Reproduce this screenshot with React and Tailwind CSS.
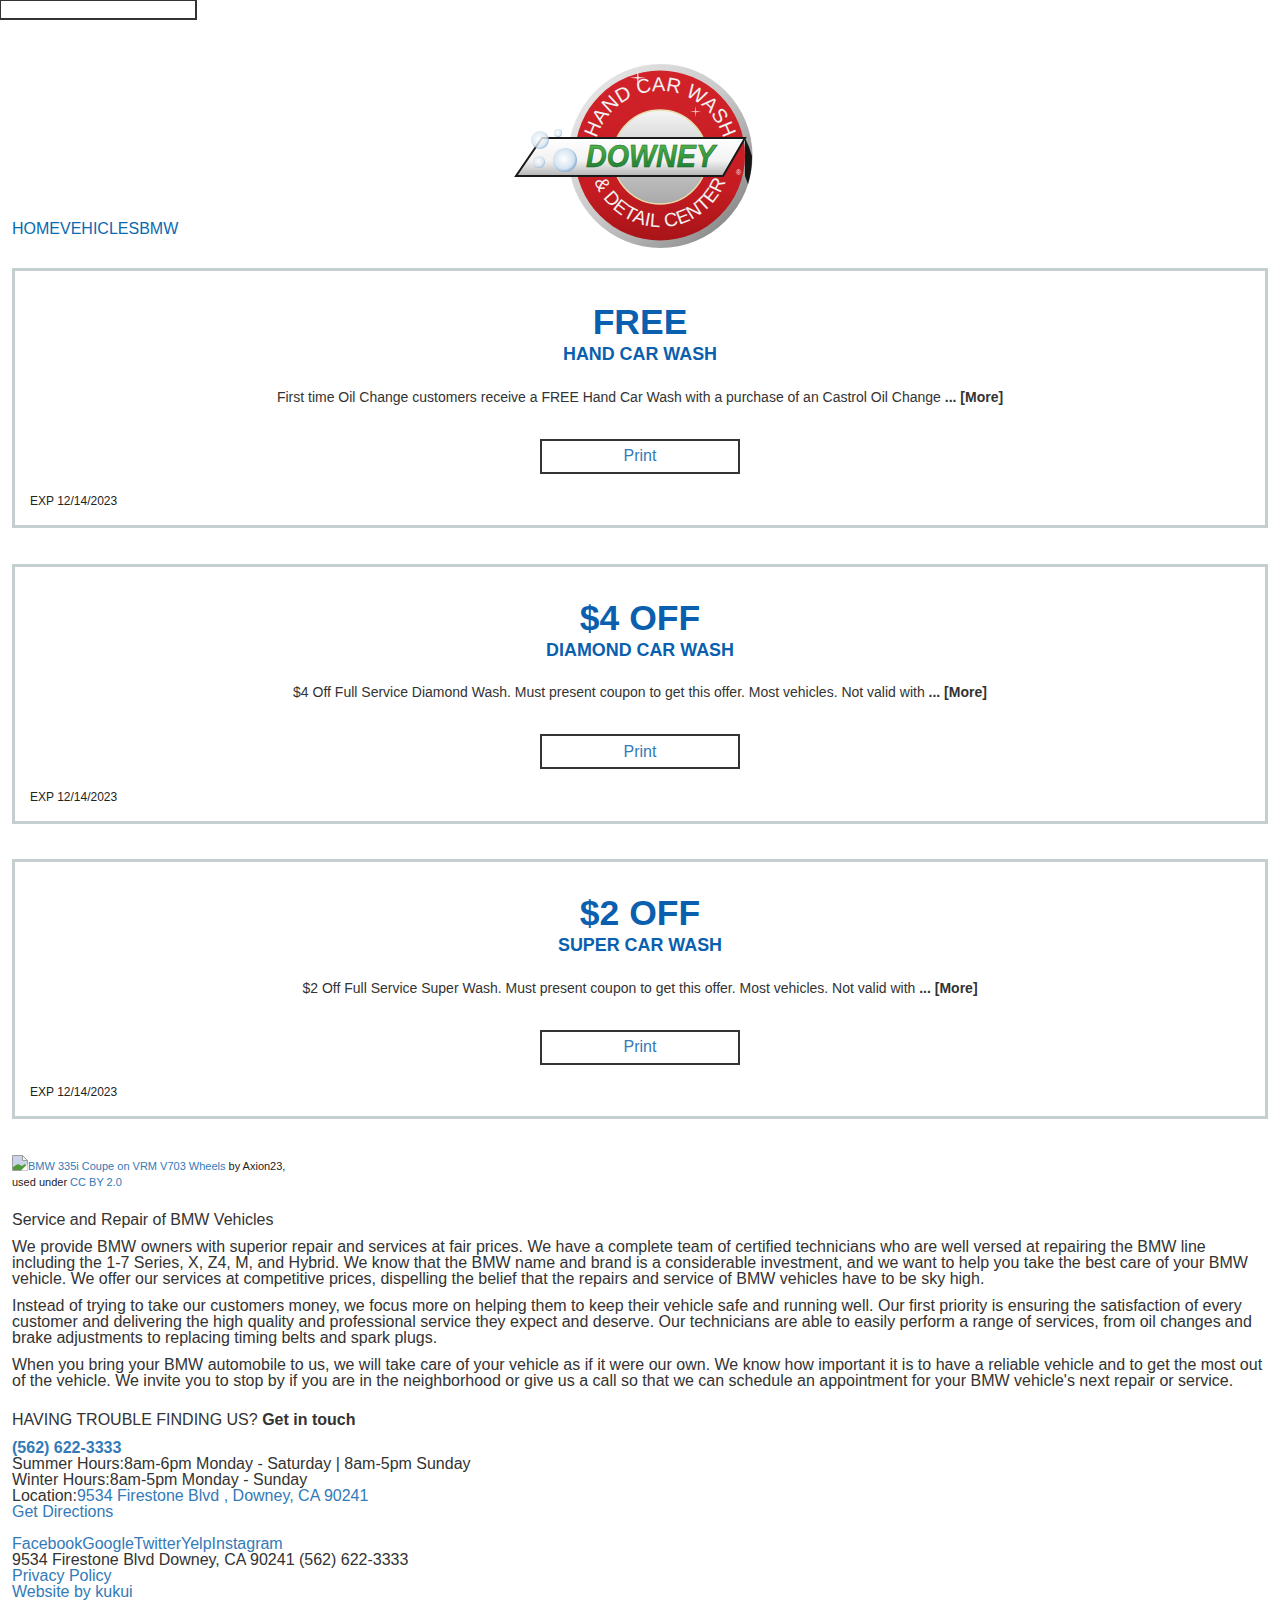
const blue = "text-[#0a5fae]";

function Logo() {
  return (
    <svg width="244" height="188" viewBox="0 0 244 188" className="block">
      <defs>
        <linearGradient id="rim" x1="0" y1="0" x2="1" y2="1">
          <stop offset="0" stopColor="#efefef" />
          <stop offset="0.5" stopColor="#c8c8c8" />
          <stop offset="0.8" stopColor="#9a9a9a" />
          <stop offset="1" stopColor="#6a6a6a" />
        </linearGradient>
        <linearGradient id="red" x1="0" y1="0" x2="0" y2="1">
          <stop offset="0" stopColor="#d2222a" />
          <stop offset="0.7" stopColor="#c41c22" />
          <stop offset="1" stopColor="#a81418" />
        </linearGradient>
        <linearGradient id="inner" x1="0" y1="0" x2="0" y2="1">
          <stop offset="0" stopColor="#f5f5f5" />
          <stop offset="0.45" stopColor="#cfcfcf" />
          <stop offset="1" stopColor="#a9a9a9" />
        </linearGradient>
        <linearGradient id="band" x1="0" y1="0" x2="0" y2="1">
          <stop offset="0" stopColor="#ffffff" />
          <stop offset="0.6" stopColor="#f2f2f2" />
          <stop offset="1" stopColor="#b5b5b5" />
        </linearGradient>
        <linearGradient id="green" x1="0" y1="0" x2="0" y2="1">
          <stop offset="0" stopColor="#5bbd4a" />
          <stop offset="1" stopColor="#14752f" />
        </linearGradient>
        <radialGradient id="bub" cx="0.45" cy="0.45" r="0.6">
          <stop offset="0" stopColor="#ffffff" />
          <stop offset="0.7" stopColor="#d5e4f0" />
          <stop offset="1" stopColor="#6f9fc9" />
        </radialGradient>
        <path id="topArc" d="M 80 95 A 66 66 0 0 1 212 95" />
        <path id="botArc" d="M 76 95 A 70 70 0 0 0 216 95" />
      </defs>
      <circle cx="146.5" cy="94" r="92" fill="url(#rim)" />
      <circle cx="146" cy="93.5" r="85" fill="url(#red)" />
      <path d="M231 76 A 92 92 0 0 1 238 94 A 92 92 0 0 1 234 122 L231 114 Z" fill="#151515" />
      <circle cx="146" cy="95" r="47" fill="url(#inner)" stroke="#e9dca8" strokeWidth="1.5" />
      <text fontFamily="'Liberation Sans', sans-serif" fontSize="20" fill="#f1f1f1" textAnchor="middle">
        <textPath href="#topArc" startOffset="50%">HAND CAR WASH</textPath>
      </text>
      <text fontFamily="'Liberation Sans', sans-serif" fontSize="19" fill="#f1f1f1" textAnchor="middle" letterSpacing="0.3">
        <textPath href="#botArc" startOffset="50%">&amp; DETAIL CENTER</textPath>
      </text>
      <polygon points="28,76 231,76 209,114 2,114" fill="url(#band)" stroke="#1a1a1a" strokeWidth="2" />
      <text x="72" y="105" fontFamily="'Liberation Sans', sans-serif" fontWeight="700" fontStyle="italic" fontSize="31" fill="url(#green)" stroke="#0f6029" strokeWidth="0.5" textLength="129" lengthAdjust="spacingAndGlyphs">DOWNEY</text>
      <text x="222" y="113" fontFamily="'Liberation Sans', sans-serif" fontSize="7" fill="#f1f1f1">®</text>
      <circle cx="51" cy="98" r="12" fill="url(#bub)" />
      <circle cx="25" cy="100" r="6" fill="url(#bub)" opacity="0.8" />
      <circle cx="26" cy="78" r="9" fill="url(#bub)" opacity="0.8" />
      <circle cx="44" cy="71" r="4" fill="url(#bub)" opacity="0.8" />
      <path d="M123 15 l0.8 -7 l0.8 7 l7 0.8 l-7 0.8 l-0.8 7 l-0.8 -7 l-7 -0.8z" fill="#fff" opacity="0.85" />
      <path d="M181 49 l0.6 -5 l0.6 5 l5 0.6 l-5 0.6 l-0.6 5 l-0.6 -5 l-5 -0.6z" fill="#fff" opacity="0.7" />
    </svg>
  );
}

function BrokenImage() {
  return (
    <svg width="16" height="16" viewBox="0 0 16 16" className="inline-block align-[-1px]">
      <path d="M0.5 0.5 H10.5 L15.5 5.5 V15.5 H0.5 Z" fill="#c9d4e6" stroke="#9e9e9e" />
      <path d="M10.5 0.5 V5.5 H15.5 Z" fill="#f4f4f4" stroke="#9e9e9e" />
      <path d="M1 15 V12 L6 9 L10 11 L13 9 L15 11 V15 Z" fill="#4f9a3a" />
      <path d="M9 15.5 L15.5 9 V15.5 Z" fill="#ffffff" />
    </svg>
  );
}

function Coupon({ title, subtitle, body }) {
  return (
    <div className="border-[3px] border-[#c6cfcf] h-[260px] mb-[35.5px] px-[15px] pt-[33px] flex flex-col items-center">
      <div className={`text-[35.5px] leading-[36px] font-bold ${blue}`}>{title}</div>
      <div className={`text-[17.9px] leading-[24px] font-bold mt-[2px] ${blue}`}>{subtitle}</div>
      <p className="text-[14px] leading-[20px] text-[#333] mt-[20.5px]">
        {body} <b>... [More]</b>
      </p>
      <div className="w-[200px] h-[35px] mt-[32px] border-2 border-[#333] flex items-center justify-center text-[16px] text-[#337ab7]">
        Print
      </div>
      <div className="self-stretch text-[12px] leading-[16px] text-[#222] mt-[19.5px]">EXP 12/14/2023</div>
    </div>
  );
}

export default function App() {
  return (
    <div className="font-['Liberation_Sans',Arial,sans-serif] text-[16px] leading-[16px] text-[#333] bg-white h-[1600px] overflow-hidden">
      <div className="w-[197px] h-[20px] border-t border-l border-r-2 border-b-2 border-[#333]" />
      <div className="px-[12px]">
        <div className="grid grid-cols-[1fr_auto_1fr] items-end h-[248px]">
          <div className="text-[#0a6ab0] text-[16px] leading-[20px] mb-[29px]">
            <a>HOME</a><a>VEHICLES</a><a>BMW</a>
          </div>
          <div className="pb-[18px] -translate-x-[4px]"><Logo /></div>
          <div />
        </div>
        <Coupon title="FREE" subtitle="HAND CAR WASH" body="First time Oil Change customers receive a FREE Hand Car Wash with a purchase of an Castrol Oil Change" />
        <Coupon title="$4 OFF" subtitle="DIAMOND CAR WASH" body="$4 Off Full Service Diamond Wash. Must present coupon to get this offer. Most vehicles. Not valid with" />
        <Coupon title="$2 OFF" subtitle="SUPER CAR WASH" body="$2 Off Full Service Super Wash. Must present coupon to get this offer. Most vehicles. Not valid with" />
        <div className="text-[11px] leading-[16px] text-[#222]">
          <div><BrokenImage /><a className="text-[#337ab7]">BMW 335i Coupe on VRM V703 Wheels</a> by Axion23,</div>
          <div>used under <a className="text-[#337ab7]">CC BY 2.0</a></div>
        </div>
        <div className="mt-[21px] leading-[18px]">Service and Repair of BMW Vehicles</div>
        <p className="mt-[10px]">We provide BMW owners with superior repair and services at fair prices. We have a complete team of certified technicians who are well versed at repairing the BMW line including the 1-7 Series, X, Z4, M, and Hybrid. We know that the BMW name and brand is a considerable investment, and we want to help you take the best care of your BMW vehicle. We offer our services at competitive prices, dispelling the belief that the repairs and service of BMW vehicles have to be sky high.</p>
        <p className="mt-[11px]">Instead of trying to take our customers money, we focus more on helping them to keep their vehicle safe and running well. Our first priority is ensuring the satisfaction of every customer and delivering the high quality and professional service they expect and deserve. Our technicians are able to easily perform a range of services, from oil changes and brake adjustments to replacing timing belts and spark plugs.</p>
        <p className="mt-[11px]">When you bring your BMW automobile to us, we will take care of your vehicle as if it were our own. We know how important it is to have a reliable vehicle and to get the most out of the vehicle. We invite you to stop by if you are in the neighborhood or give us a call so that we can schedule an appointment for your BMW vehicle's next repair or service.</p>
        <div className="mt-[22px] leading-[18px]">HAVING TROUBLE FINDING US? <b>Get in touch</b></div>
        <div className="mt-[11px]"><a className="font-bold text-[#337ab7]">(562) 622-3333</a></div>
        <div>Summer Hours:8am-6pm Monday - Saturday | 8am-5pm Sunday</div>
        <div>Winter Hours:8am-5pm Monday - Sunday</div>
        <div>Location:<a className="text-[#337ab7]">9534 Firestone Blvd , Downey, CA 90241</a></div>
        <div><a className="text-[#337ab7]">Get Directions</a></div>
        <div className="mt-[16px] text-[#337ab7]"><a>Facebook</a><a>Google</a><a>Twitter</a><a>Yelp</a><a>Instagram</a></div>
        <div>9534 Firestone Blvd Downey, CA 90241 (562) 622-3333</div>
        <div><a className="text-[#337ab7]">Privacy Policy</a></div>
        <div><a className="text-[#337ab7]">Website by kukui</a></div>
      </div>
    </div>
  );
}
